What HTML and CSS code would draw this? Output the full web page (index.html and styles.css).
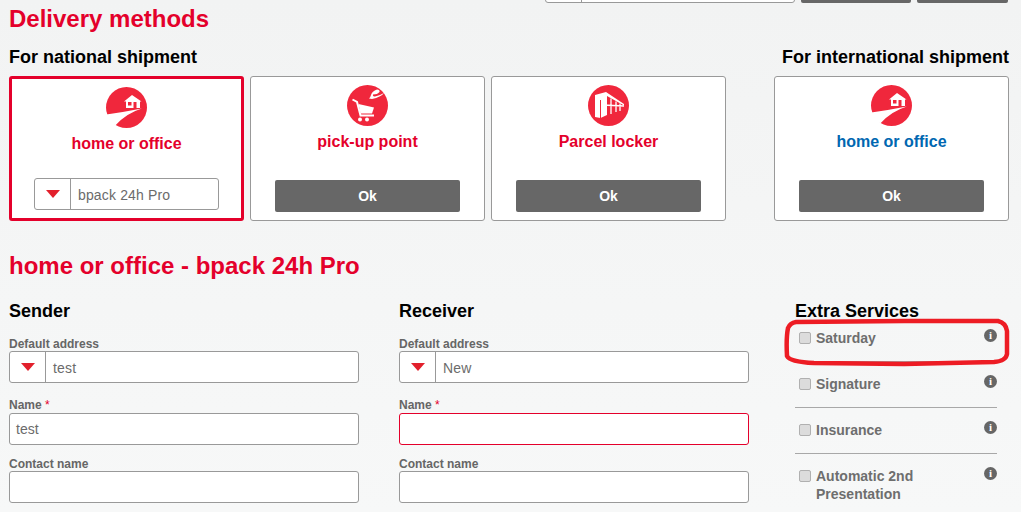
FILE: index.html
```html
<!DOCTYPE html>
<html lang="en">
<head>
<meta charset="utf-8">
<title>Delivery methods</title>
<link rel="stylesheet" href="styles.css">
</head>
<body>
<svg width="0" height="0" class="defs" aria-hidden="true">
  <symbol id="ico-home" viewBox="0 0 41 41">
    <circle cx="20.5" cy="20.5" r="20.5" fill="#f0273c"/>
    <path d="M0.3 27.500Q19 25 35.800 21.600Q20 26.500 9.300 38.600Q2.500 34.500 0.300 27.500Z" fill="#fff"/>
    <path d="M26 8L35.500 14.500L34 14.500L34 21L20 21L20 14.500L18 14.500Z" fill="#fff"/>
    <rect x="22" y="15" width="3.500" height="3.500" fill="#f0273c"/>
    <rect x="27.500" y="15" width="3" height="6" fill="#f0273c"/>
  </symbol>
  <symbol id="ico-cart" viewBox="0 0 41 41">
    <circle cx="20.500" cy="20.500" r="20.500" fill="#f0273c"/>
    <path d="M5.500 14.500L10 17L13.500 30.500L27 30.500" fill="none" stroke="#fff" stroke-width="2"/>
    <path d="M11.500 19L27 22.500L25 28.500L13.500 28.500Z" fill="#fff"/>
    <circle cx="13" cy="34.500" r="2" fill="#fff"/>
    <circle cx="20" cy="34.500" r="2" fill="#fff"/>
    <path d="M22 13.500L25 14Q34 12 37 8Q32 11 28 11.500Q25.500 11.500 26 9.500Q30.500 9.500 32.500 7Q33 4.500 30 4.500Q25 6 24 10Q23.500 12 22 13.500Z" fill="#fff" fill-rule="evenodd"/>
  </symbol>
  <symbol id="ico-locker" viewBox="0 0 41 41">
    <circle cx="20.500" cy="20.500" r="20.500" fill="#f0273c"/>
    <path d="M7 10L18 7L36 19L36 20.500L19 11L19 30L12.500 33L7 32Z" fill="#fff"/>
    <path d="M12.500 15L12.500 33" stroke="#f0273c" stroke-width="1"/>
    <path d="M14 20L36 21M23 13.500L23 29M28 16.500L28 27M32 18.500L32 26" stroke="#fff" stroke-width="1.300" fill="none"/>
  </symbol>
</svg>

<div class="page">
  <div class="topbar">
    <div class="select select-top"><span class="caret-box"></span><span class="select-value"></span></div>
    <button class="btn btn-top-a" type="button"></button>
    <button class="btn btn-top-b" type="button"></button>
  </div>

  <h1 class="title">Delivery methods</h1>

  <div class="groups">
    <section class="group">
      <h2 class="subtitle">For national shipment</h2>
      <div class="cards">
        <div class="card card-active">
          <svg class="icon"><use href="#ico-home"/></svg>
          <div class="card-name">home or office</div>
          <div class="select select-card">
            <span class="caret-box"><i class="caret"></i></span>
            <span class="select-value">bpack 24h Pro</span>
          </div>
        </div>
        <div class="card">
          <svg class="icon"><use href="#ico-cart"/></svg>
          <div class="card-name">pick-up point</div>
          <button class="btn btn-ok" type="button">Ok</button>
        </div>
        <div class="card">
          <svg class="icon"><use href="#ico-locker"/></svg>
          <div class="card-name">Parcel locker</div>
          <button class="btn btn-ok" type="button">Ok</button>
        </div>
      </div>
    </section>
    <section class="group group-intl">
      <h2 class="subtitle">For international shipment</h2>
      <div class="card">
        <svg class="icon"><use href="#ico-home"/></svg>
        <div class="card-name card-name-blue">home or office</div>
        <button class="btn btn-ok" type="button">Ok</button>
      </div>
    </section>
  </div>

  <h1 class="title title-second">home or office - bpack 24h Pro</h1>

  <div class="form-cols">
    <section class="col">
      <h2 class="subtitle">Sender</h2>
      <label class="label">Default address</label>
      <div class="select select-form">
        <span class="caret-box"><i class="caret"></i></span>
        <span class="select-value">test</span>
      </div>
      <label class="label label-name">Name<span class="req"> *</span></label>
      <div class="input">test</div>
      <label class="label label-contact">Contact name</label>
      <div class="input"></div>
    </section>
    <section class="col">
      <h2 class="subtitle">Receiver</h2>
      <label class="label">Default address</label>
      <div class="select select-form">
        <span class="caret-box"><i class="caret"></i></span>
        <span class="select-value">New</span>
      </div>
      <label class="label label-name">Name<span class="req"> *</span></label>
      <div class="input input-error"></div>
      <label class="label label-contact">Contact name</label>
      <div class="input"></div>
    </section>
    <section class="col-extra">
      <h2 class="subtitle">Extra Services</h2>
      <div class="services">
        <div class="service">
          <span class="check"></span><span class="service-name">Saturday</span><span class="info">i</span>
        </div>
        <div class="service">
          <span class="check"></span><span class="service-name">Signature</span><span class="info">i</span>
        </div>
        <div class="service">
          <span class="check"></span><span class="service-name">Insurance</span><span class="info">i</span>
        </div>
        <div class="service">
          <span class="check"></span><span class="service-name">Automatic 2nd<br>Presentation</span><span class="info">i</span>
        </div>
      </div>
      <svg class="scribble" viewBox="0 0 226 50" fill="none"><path d="M12 4L120 3L214 3Q222 5 223 13L223 36Q222 43 210 44L120 46L30 45Q6 44 3 38Q2 20 4 10Q6 5 12 4Z" stroke="#ed1c24" stroke-width="4.500"/></svg>
    </section>
  </div>
</div>
</body>
</html>
```
FILE: styles.css
```css
* { box-sizing: border-box; }
html, body { margin: 0; padding: 0; }
body {
  height: 512px;
  overflow: hidden;
  background: linear-gradient(#f2f3f3, #f7f8f8);
  font-family: "Liberation Sans", Arial, sans-serif;
  color: #000;
}
.defs { position: absolute; }
.page { padding-left: 9px; width: 1021px; }

.topbar {
  display: flex;
  gap: 6px;
  height: 32px;
  margin-top: -29px;
  padding-left: 536px;
}
.select-top { width: 250px; }
.btn-top-a { width: 110px; }
.btn-top-b { width: 91px; }

.title {
  margin: 2px 0 0;
  font-size: 24px;
  line-height: 28px;
  font-weight: bold;
  color: #e4002b;
}
.subtitle {
  margin: 0;
  font-size: 18px;
  line-height: 22px;
  font-weight: bold;
  color: #000;
}

.groups { display: flex; margin-top: 13px; }
.group { width: 765px; }
.group-intl { width: 235px; text-align: right; }
.group-intl .card { text-align: center; margin-top: 8px; }
.cards { display: flex; gap: 6px; margin-top: 8px; }

.card {
  width: 235px;
  height: 145px;
  background: #fff;
  border: 1px solid #999;
  border-radius: 3px;
  padding-top: 8px;
  display: flex;
  flex-direction: column;
  align-items: center;
}
.card-active {
  border: 3px solid #e4002b;
  padding-top: 8px;
}
.icon { width: 41px; height: 41px; display: block; flex: none; }
.card-name {
  margin-top: 6px;
  font-size: 16px;
  line-height: 20px;
  font-weight: bold;
  color: #e4002b;
}
.card-name-blue { color: #0067b1; }

.btn {
  border: 0;
  border-radius: 2px;
  background: #676767;
  color: #fff;
  font: bold 14px "Liberation Sans", Arial, sans-serif;
  padding: 0;
}
.btn-ok { width: 185px; height: 32px; margin-top: auto; margin-bottom: 8px; }

.select {
  display: flex;
  height: 32px;
  background: #fff;
  border: 1px solid #999;
  border-radius: 3px;
}
.caret-box {
  flex: none;
  width: 36px;
  border-right: 1px solid #999;
  display: flex;
  align-items: center;
  justify-content: center;
}
.caret {
  width: 0;
  height: 0;
  border-left: 7px solid transparent;
  border-right: 7px solid transparent;
  border-top: 8px solid #e2202c;
}
.select-value {
  padding-left: 7px;
  font-size: 14px;
  line-height: 32px;
  letter-spacing: .15px;
  color: #6b6b6b;
}
.select-card { width: 185px; margin-top: auto; margin-bottom: 8px; }

.title-second { margin-top: 31px; }
.form-cols { display: flex; margin-top: 20px; }
.col { width: 350px; margin-right: 40px; }
.col-extra { width: 202px; margin-left: 6px; position: relative; }
.label {
  display: block;
  font-size: 12px;
  line-height: 14px;
  font-weight: bold;
  color: #666;
  margin: 15px 0 0;
}
.label-name { margin-top: 15px; margin-bottom: 1px; }
.label-contact { margin-top: 12px; margin-bottom: 0; }
.req { color: #e4002b; font-weight: normal; }
.input {
  height: 32px;
  background: #fff;
  border: 1px solid #999;
  border-radius: 3px;
  padding-left: 6px;
  font-size: 14px;
  line-height: 30px;
  color: #6b6b6b;
}
.input-error { border-color: #e4002b; }

.services { margin-top: -6px; }
.service {
  display: flex;
  align-items: flex-start;
  min-height: 46px;
  padding: 13px 0 4px 4px;
  border-bottom: 1px solid #a8a8a8;
}
.service:last-child { border-bottom: 0; }
.check {
  flex: none;
  width: 12px;
  height: 12px;
  margin-top: 3px;
  border: 1px solid #b0b0b0;
  border-radius: 2px;
  background: #dcdcdc;
}
.service-name {
  margin-left: 5px;
  flex: 1;
  font-size: 14px;
  line-height: 18px;
  font-weight: bold;
  color: #6e6e6e;
}
.info {
  flex: none;
  width: 13px;
  height: 13px;
  margin-top: 0;
  border-radius: 50%;
  background: #666;
  color: #fff;
  font: bold 11px/13px "Liberation Serif", serif;
  text-align: center;
}
.scribble {
  position: absolute;
  left: -11px;
  top: 18px;
  width: 226px;
  height: 50px;
}
```
